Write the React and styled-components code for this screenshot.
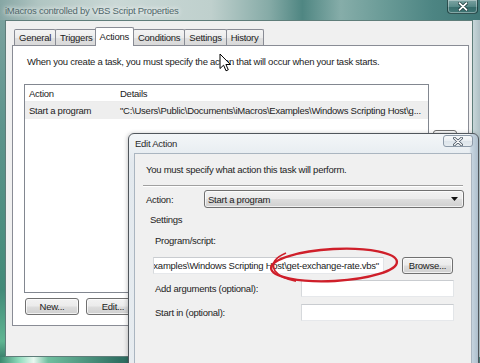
import React from "react";
import styled, { createGlobalStyle } from "styled-components";

const Global = createGlobalStyle`
  *, *::before, *::after { box-sizing: border-box; }
  html, body { margin: 0; padding: 0; }
  body {
    width: 480px;
    height: 363px;
    overflow: hidden;
    font-family: "Liberation Sans", Arial, sans-serif;
    font-size: 9.5px;
    letter-spacing: -0.25px;
    color: #1c1c1c;
    background: #3f7f78;
  }
`;

const Desktop = styled.div`
  position: relative;
  width: 480px;
  height: 363px;
  overflow: hidden;
`;

/* ---------- outer properties window ---------- */

const PropsWindow = styled.div`
  position: absolute;
  left: 0;
  top: 0;
  width: 480px;
  height: 363px;
  display: flex;
  flex-direction: column;
  background:
    linear-gradient(90deg, transparent 98.4%, #c6d5d8 98.6%, #aebfc4 100%),
    linear-gradient(180deg, #7fa4a1 0%, #5d948c 35%, #428a78 80%, #5fb592 94%, #2f6f60 100%);
`;

const GlassTitle = styled.div`
  height: 20px;
  flex: none;
  display: flex;
  align-items: flex-start;
  background: linear-gradient(90deg, #86a6a4 0%, #b0c5c2 8%, #cad8d6 24%, #bfd0cd 44%, #86aba7 56%, #4f8682 63%, #86ada9 71%, #6a9b97 80%, #4d8583 90%, #3f7776 100%);
`;

const TitleText = styled.span`
  padding: 5px 0 0 5px;
  line-height: 12px;
  color: #50676a;
  text-shadow: 0 0 4px #fff, 0 0 7px rgba(255, 255, 255, 0.8);
`;

const CaptionClose = styled.div`
  margin-left: auto;
  margin-right: 2px;
  width: 31px;
  height: 14px;
  border: 1px solid rgba(25, 55, 55, 0.75);
  border-top: none;
  border-radius: 0 0 4px 4px;
  box-shadow: inset 0 0 0 1px rgba(255, 255, 255, 0.35);
  background: linear-gradient(180deg, rgba(255, 255, 255, 0.3), rgba(255, 255, 255, 0.1) 50%, rgba(0, 40, 40, 0.18) 52%, rgba(0, 40, 40, 0.05));
  display: flex;
  align-items: center;
  justify-content: center;
`;

const Client = styled.div`
  flex: 1;
  margin: 0 7px 0 5px;
  background: #f0f0f0;
  border: 1px solid #5f7d7a;
  padding: 6px 3px 0 6px;
  display: flex;
  flex-direction: column;
`;

const FrameBottom = styled.div`
  height: 6px;
  flex: none;
  background: linear-gradient(90deg, #3b8a6f 0%, #8fdcbc 4%, #e8f8f0 7%, #6fbf9f 10%, #2f6f62 25%, #3d7b74 60%, #4f7f7c 100%);
`;

const TabStrip = styled.div`
  height: 19px;
  display: flex;
  align-items: flex-end;
  padding-left: 2px;
  margin-bottom: -1px;
  position: relative;
  z-index: 1;
`;

const Tab = styled.div`
  position: relative;
  height: ${(p) => (p.$active ? "19px" : "16px")};
  margin: ${(p) => (p.$active ? "0 -1px 0 -2px" : "0 -1px 1px 0")};
  z-index: ${(p) => (p.$active ? 2 : 1)};
  padding: 0 4px ${(p) => (p.$active ? "2px" : "0")};
  display: flex;
  align-items: center;
  border: 1px solid #898c95;
  border-bottom: none;
  border-radius: 2px 2px 0 0;
  background: ${(p) => (p.$active ? "#fff" : "linear-gradient(180deg, #f4f4f4 0%, #ececec 50%, #e0e0e0 52%, #d9d9d9 100%)")};
`;

const TabPanel = styled.div`
  height: 281px;
  background: #fff;
  border: 1px solid #898c95;
  padding: 10px 0 0 11px;
  display: flex;
  flex-direction: column;
`;

const Intro = styled.div`
  padding-left: 3px;
  line-height: 12px;
  white-space: nowrap;
`;

const ListRow = styled.div`
  margin-top: 16px;
  display: flex;
  gap: 4px;
`;

const ListView = styled.div`
  width: 405px;
  height: 209px;
  border: 1px solid #828790;
  background: #fff;
`;

const ListLine = styled.div`
  display: grid;
  grid-template-columns: 91px 1fr;
  height: 17px;
  align-items: center;
  background: ${(p) => (p.$selected ? "#eeeeee" : "#fff")};
  border-bottom: ${(p) => (p.$head ? "1px solid #ececec" : "none")};
  white-space: nowrap;
  overflow: hidden;

  span {
    padding-left: 4px;
    overflow: hidden;
  }
`;

const SideButtons = styled.div`
  padding-top: 46px;
  display: flex;
  flex-direction: column;
  gap: 4px;
`;

const Button = styled.div`
  width: ${(p) => p.$w || 54}px;
  height: ${(p) => p.$h || 17}px;
  border: 1px solid #707070;
  border-radius: 3px;
  box-shadow: inset 0 0 0 1px rgba(255, 255, 255, 0.7);
  background: linear-gradient(180deg, #f2f2f2 0%, #ebebeb 48%, #dddddd 52%, #cfcfcf 100%);
  display: flex;
  align-items: center;
  justify-content: center;
  white-space: nowrap;
`;

const ButtonRow = styled.div`
  margin: 5px 0 0 1px;
  display: flex;
  gap: 7px;
`;

/* ---------- edit action dialog ---------- */

const Dialog = styled.div`
  position: absolute;
  left: 128px;
  top: 133px;
  width: 351px;
  height: 240px;
  border: 1px solid #50565c;
  border-radius: 6px 6px 0 0;
  padding: 0 6px 0 5px;
  display: flex;
  flex-direction: column;
  background:
    linear-gradient(90deg, transparent 97.5%, #c9d7e2 98%, #aebfcd 100%),
    linear-gradient(180deg, #f3f6f8 0%, #e3e9ee 12%, #e7ecf0 100%);
  box-shadow: -1px 0 4px rgba(0, 0, 0, 0.2);
`;

const DialogTitle = styled.div`
  height: 19px;
  flex: none;
  display: flex;
  align-items: flex-start;
`;

const DialogTitleText = styled.span`
  padding: 4px 0 0 1px;
  line-height: 12px;
  color: #2a2a2a;
`;

const DialogClose = styled.div`
  margin: 1px -1px 0 auto;
  width: 30px;
  height: 12px;
  border: 1px solid #8d9aa8;
  border-radius: 3px;
  background: linear-gradient(180deg, #f7f9fa 0%, #e9eef2 50%, #dde4ea 52%, #e6ecf0 100%);
  display: flex;
  align-items: center;
  justify-content: center;
`;

const DialogClient = styled.div`
  flex: 1;
  background: #f0f0f0;
  border: 1px solid #aab5c0;
  border-bottom: none;
  display: flex;
  flex-direction: column;
`;

const Instruction = styled.div`
  height: 31px;
  padding-left: 11px;
  display: flex;
  align-items: center;
  white-space: nowrap;
`;

const Etched = styled.div`
  height: 2px;
  margin: 0 8px;
  border-top: 1px solid #a0a0a0;
  border-bottom: 1px solid #ffffff;
`;

const ActionRow = styled.div`
  margin-top: 3px;
  display: grid;
  grid-template-columns: 69px 260px;
  align-items: center;

  label {
    padding-left: 11px;
  }
`;

const Combo = styled.div`
  height: 18px;
  border: 1px solid #707070;
  border-radius: 3px;
  box-shadow: inset 0 0 0 1px rgba(255, 255, 255, 0.7);
  background: linear-gradient(180deg, #f2f2f2 0%, #ebebeb 48%, #dddddd 52%, #cfcfcf 100%);
  padding: 0 5px 0 3px;
  display: flex;
  align-items: center;
  justify-content: space-between;
`;

const SectionLabel = styled.div`
  margin-top: ${(p) => p.$top}px;
  padding-left: ${(p) => p.$indent}px;
  line-height: 12px;
`;

const ProgramRow = styled.div`
  margin-top: 10px;
  padding-left: 18px;
  display: flex;
  align-items: center;
  gap: 18px;
`;

const TextBox = styled.div`
  width: ${(p) => p.$w}px;
  height: 17px;
  background: #fff;
  border: 1px solid;
  border-color: #c9ccd0 #e2e5e8 #e6e8eb #d6d9dc;
  padding-right: 4px;
  display: flex;
  align-items: center;
  justify-content: flex-end;
  overflow: hidden;
  white-space: nowrap;
`;

const FieldGrid = styled.div`
  margin-top: 6px;
  padding-left: 20px;
  display: grid;
  grid-template-columns: 146px 153px;
  grid-auto-rows: 17px;
  row-gap: 7px;
  align-items: center;
`;

const Annotation = styled.svg`
  position: absolute;
  left: 137px;
  top: 111px;
  pointer-events: none;
`;

const Pointer = styled.svg`
  position: absolute;
  left: 219px;
  top: 53px;
`;

const CloseGlyph = ({ dark, light, w }) => (
  <svg width="10" height="9" viewBox="0 0 10 9">
    <path d="M1.5 1.2 L8.5 7.8 M8.5 1.2 L1.5 7.8" stroke={dark} strokeWidth={w} strokeLinecap="round" />
    <path d="M1.5 1.2 L8.5 7.8 M8.5 1.2 L1.5 7.8" stroke={light} strokeWidth={w - 1.6} strokeLinecap="round" />
  </svg>
);

const tabs = ["General", "Triggers", "Actions", "Conditions", "Settings", "History"];

export default function App() {
  return (
    <Desktop>
      <Global />
      <PropsWindow>
        <GlassTitle>
          <TitleText>iMacros controlled by VBS Script Properties</TitleText>
          <CaptionClose>
            <CloseGlyph dark="#1f3f40" light="#ffffff" w={3.4} />
          </CaptionClose>
        </GlassTitle>
        <Client>
          <TabStrip>
            {tabs.map((t) => (
              <Tab key={t} $active={t === "Actions"}>{t}</Tab>
            ))}
          </TabStrip>
          <TabPanel>
            <Intro>When you create a task, you must specify the action that will occur when your task starts.</Intro>
            <ListRow>
              <ListView>
                <ListLine $head>
                  <span>Action</span>
                  <span>Details</span>
                </ListLine>
                <ListLine $selected>
                  <span>Start a program</span>
                  <span>"C:\Users\Public\Documents\iMacros\Examples\Windows Scripting Host\g...</span>
                </ListLine>
              </ListView>
              <SideButtons>
                <Button $w={24} $h={20} />
                <Button $w={24} $h={20} />
              </SideButtons>
            </ListRow>
            <ButtonRow>
              <Button>New...</Button>
              <Button>Edit...</Button>
            </ButtonRow>
          </TabPanel>
        </Client>
        <FrameBottom />
      </PropsWindow>

      <Pointer width="13" height="20" viewBox="0 0 13 20">
        <path d="M1 1 V15.5 L4.6 12.2 L7 17.8 L9.3 16.8 L6.9 11.5 H11.4 Z" fill="#fff" stroke="#000" strokeWidth="1" strokeLinejoin="round" />
      </Pointer>

      <Dialog>
        <DialogTitle>
          <DialogTitleText>Edit Action</DialogTitleText>
          <DialogClose>
            <CloseGlyph dark="#45525f" light="#ffffff" w={2.8} />
          </DialogClose>
        </DialogTitle>
        <DialogClient>
          <Instruction>You must specify what action this task will perform.</Instruction>
          <Etched />
          <ActionRow>
            <label>Action:</label>
            <Combo>
              <span>Start a program</span>
              <svg width="7" height="4" viewBox="0 0 7 4">
                <path d="M0 0 H7 L3.5 4 Z" fill="#111" />
              </svg>
            </Combo>
          </ActionRow>
          <SectionLabel $top={6} $indent={15}>Settings</SectionLabel>
          <SectionLabel $top={9} $indent={20}>Program/script:</SectionLabel>
          <ProgramRow>
            <TextBox $w={231}>"C:\Users\Public\Documents\iMacros\Examples\Windows Scripting Host\get-exchange-rate.vbs"</TextBox>
            <Button $w={51}>Browse...</Button>
          </ProgramRow>
          <FieldGrid>
            <label>Add arguments (optional):</label>
            <TextBox $w={153} />
            <label>Start in (optional):</label>
            <TextBox $w={153} />
          </FieldGrid>
        </DialogClient>
        <Annotation width="136" height="42" viewBox="0 0 136 42">
          <ellipse cx="68" cy="20" rx="63" ry="16" transform="rotate(-3 68 20)" fill="none" stroke="#cf1f2a" strokeWidth="2.4" />
          <path d="M20 8 Q3 15 9 26 Q14 33 30 36" fill="none" stroke="#cf1f2a" strokeWidth="1.8" />
        </Annotation>
      </Dialog>
    </Desktop>
  );
}
